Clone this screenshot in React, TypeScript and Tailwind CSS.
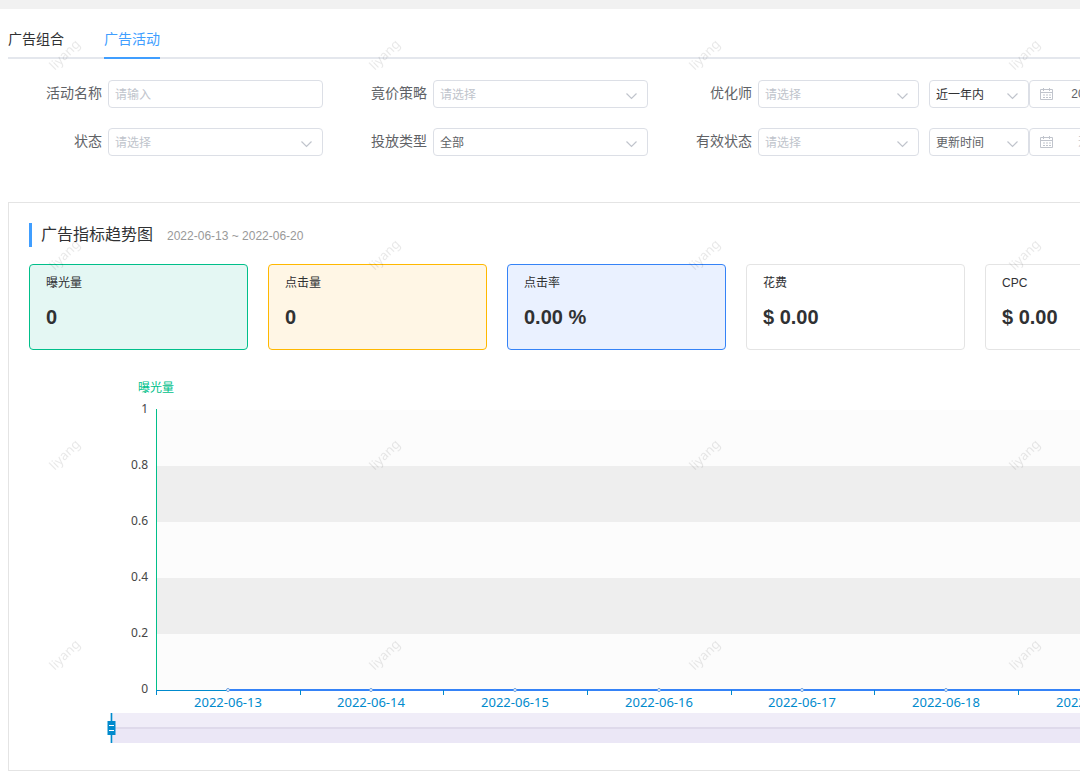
import { useState } from "react";

const metrics = [
  { label: "曝光量", value: "0", style: "border-[#00bf8a] bg-[#e4f7f3]" },
  { label: "点击量", value: "0", style: "border-[#ffb800] bg-[#fff6e5]" },
  { label: "点击率", value: "0.00 %", style: "border-[#3583f7] bg-[#eaf1ff]" },
  { label: "花费", value: "$ 0.00", style: "border-[#e4e4e4] bg-white" },
  { label: "CPC", value: "$ 0.00", style: "border-[#e4e4e4] bg-white" },
];

const days = [
  "2022-06-13",
  "2022-06-14",
  "2022-06-15",
  "2022-06-16",
  "2022-06-17",
  "2022-06-18",
  "2022-06-19",
  "2022-06-20",
];
const ticks = ["1", "0.8", "0.6", "0.4", "0.2", "0"];

function Select({
  id,
  label,
  options,
  color = "text-[#c0c4cc]",
}: {
  id: string;
  label?: string;
  options: string[];
  color?: string;
}) {
  return (
    <div className="relative h-7">
      <select
        id={id}
        aria-label={label}
        className={`block h-7 w-full appearance-none rounded border border-[#dcdfe6] bg-white pt-px pr-7 pl-1.5 text-xs outline-none focus:border-[#409eff] ${color}`}
      >
        {options.map((option) => (
          <option key={option}>{option}</option>
        ))}
      </select>
      <svg
        className="pointer-events-none absolute top-2.5 right-2.5 h-3 w-3"
        viewBox="0 0 12 12"
        fill="none"
        stroke="#c0c4cc"
        strokeWidth="1.2"
      >
        <path d="M.5 3.5l5 5 5-5" />
      </svg>
    </div>
  );
}

function Field({
  id,
  label,
  className,
  children,
}: {
  id: string;
  label: string;
  className: string;
  children: React.ReactNode;
}) {
  return (
    <div className="flex shrink-0 gap-1.5">
      <label htmlFor={id} className="w-[94px] text-right text-sm leading-[26px] text-[#606266]">
        {label}
      </label>
      <div className={className}>{children}</div>
    </div>
  );
}

function DateRange({ label, value }: { label: string; value: string }) {
  return (
    <div className="flex h-7 w-60 shrink-0 items-center rounded border border-[#dcdfe6] pl-2.5">
      <svg className="h-3.5 w-3.5 shrink-0" viewBox="0 0 14 14" fill="none" stroke="#c0c4cc">
        <path d="M.5 2.5h12v10H.5zM.5 5.5h12M3.5 1v3M9.5 1v3" />
        <path d="M3 8h8M3 10.5h8" strokeDasharray="2 1" />
      </svg>
      <input
        aria-label={label}
        defaultValue={value}
        placeholder="开始日期"
        className="ml-1 w-22 text-center text-xs text-[#606266] outline-none placeholder:text-[#c0c4cc]"
      />
      <span className="text-xs text-[#303133]">至</span>
    </div>
  );
}

function TrendChart() {
  const left = 127;
  const width = 1149;
  const at = (n: number) => left + Math.round((n * width) / days.length);

  return (
    <svg
      className="block shrink-0 font-['Noto_Sans','Noto_Sans_CJK_SC',sans-serif]"
      width="1300"
      height="400"
      fontSize="13"
      role="img"
      aria-label="广告指标趋势图"
    >
      <text x={left} y="42" fontSize="12" textAnchor="middle" fill="#00bf8a">
        曝光量
      </text>
      {ticks.slice(1).map((tick, i) => (
        <rect
          key={tick}
          x={left + 1}
          y={60 + i * 56}
          width={width}
          height="56"
          fill={i % 2 ? "#eeeeee" : "#fcfcfc"}
        />
      ))}
      {ticks.map((tick, i) => (
        <text key={tick} x="119" y={63 + i * 56} fontSize="12" textAnchor="end" fill="#464646">
          {tick}
        </text>
      ))}
      <path d={`M${left + 0.5} 59v281`} stroke="#00bf8a" />
      <path d={`M${left} 340.5h${width}`} stroke="#008acd" />
      <path d={`M${at(0.5)} 340H${at(7.5)}`} stroke="#3583f7" strokeWidth="2" />
      {days.map((day, i) => (
        <g key={day}>
          <path d={`M${at(i) + 0.5} 340v5`} stroke="#008acd" />
          <circle cx={at(i + 0.5)} cy="340" r="1.5" fill="#fff" stroke="#6a9ee0" />
          <text x={at(i + 0.5)} y="357" textAnchor="middle" fill="#008acd">
            {day}
          </text>
        </g>
      ))}

      {/* zoom slider */}
      <rect x="82" y="363" width="1218" height="15" fill="#f0edf8" />
      <rect x="82" y="378" width="1218" height="15" fill="#ebe7f6" />
      <path d="M82 378h1218" stroke="#dfdaeb" strokeWidth="2" />
      <path d="M82.5 363v30" stroke="#a6d4ec" strokeWidth="3" />
      <path d="M82.5 363v30" stroke="#008acd" />
      <rect x="78.5" y="371" width="8" height="14" fill="#008acd" />
      <path d="M80 375.5h5M80 380.5h5" stroke="#fff" />
    </svg>
  );
}

function Watermark() {
  return (
    <svg className="pointer-events-none fixed inset-0 h-full w-full" aria-hidden="true">
      <defs>
        <pattern id="mark" width="320" height="200" patternUnits="userSpaceOnUse">
          <text
            x="65"
            y="59"
            fontSize="13"
            textAnchor="middle"
            transform="rotate(-45 65 55)"
            fill="#000"
            fillOpacity="0.09"
            className="font-['Noto_Sans',sans-serif]"
          >
            liyang
          </text>
        </pattern>
      </defs>
      <rect width="100%" height="100%" fill="url(#mark)" />
    </svg>
  );
}

export default function App() {
  const [tab, setTab] = useState("广告活动");

  return (
    <main className="min-h-screen overflow-hidden border-t-9 border-[#f1f1f1] bg-white pb-2.5 pl-2 font-['Liberation_Sans','Noto_Sans_CJK_SC',sans-serif] text-[#303133]">
      <nav className="flex gap-10 border-b-2 border-[#e4e7ed] pt-3">
        {["广告组合", "广告活动"].map((name) => (
          <button
            key={name}
            onClick={() => setTab(name)}
            className={`-mb-0.5 h-[38px] border-b-2 text-sm ${
              tab === name ? "border-[#409eff] text-[#409eff]" : "border-transparent"
            }`}
          >
            {name}
          </button>
        ))}
      </nav>

      <form className="mt-[21px] flex flex-col gap-5">
        <div className="flex gap-2.5">
          <Field id="name" label="活动名称" className="w-[215px]">
            <input
              id="name"
              placeholder="请输入"
              className="block h-7 w-full rounded border border-[#dcdfe6] px-1.5 pt-px text-xs outline-none placeholder:text-[#c0c4cc] focus:border-[#409eff]"
            />
          </Field>
          <Field id="strategy" label="竟价策略" className="w-[215px]">
            <Select id="strategy" options={["请选择"]} />
          </Field>
          <Field id="optimizer" label="优化师" className="w-[161px]">
            <Select id="optimizer" options={["请选择"]} />
          </Field>
          <div className="flex shrink-0">
            <div className="w-[100px]">
              <Select id="period" label="时间范围" options={["近一年内"]} color="text-[#303133]" />
            </div>
            <DateRange label="开始日期" value="2021-06-20" />
          </div>
        </div>
        <div className="flex gap-2.5">
          <Field id="status" label="状态" className="w-[215px]">
            <Select id="status" options={["请选择"]} />
          </Field>
          <Field id="type" label="投放类型" className="w-[215px]">
            <Select id="type" options={["全部"]} color="text-[#606266]" />
          </Field>
          <Field id="valid" label="有效状态" className="w-[161px]">
            <Select id="valid" options={["请选择"]} />
          </Field>
          <div className="flex shrink-0">
            <div className="w-[100px]">
              <Select id="time" label="时间类型" options={["更新时间"]} color="text-[#606266]" />
            </div>
            <DateRange label="更新开始日期" value="" />
          </div>
        </div>
      </form>

      <section className="mt-[46px] overflow-hidden border border-r-0 border-[#e4e4e4] pt-5 pb-5 pl-5">
        <header className="flex items-center border-l-3 border-[#409eff] pl-[9px]">
          <h2 className="text-base leading-6">广告指标趋势图</h2>
          <span className="ml-3.5 pt-0.5 text-xs text-[#999]">2022-06-13 ~ 2022-06-20</span>
        </header>
        <div className="mt-[17px] flex gap-5">
          {metrics.map((metric) => (
            <div
              key={metric.label}
              className={`h-[86px] w-[219px] shrink-0 rounded border px-4 pt-2.5 ${metric.style}`}
            >
              <p className="text-xs leading-4">{metric.label}</p>
              <p className="mt-3 text-xl leading-7 font-bold">{metric.value}</p>
            </div>
          ))}
        </div>
        <TrendChart />
      </section>
      <Watermark />
    </main>
  );
}
